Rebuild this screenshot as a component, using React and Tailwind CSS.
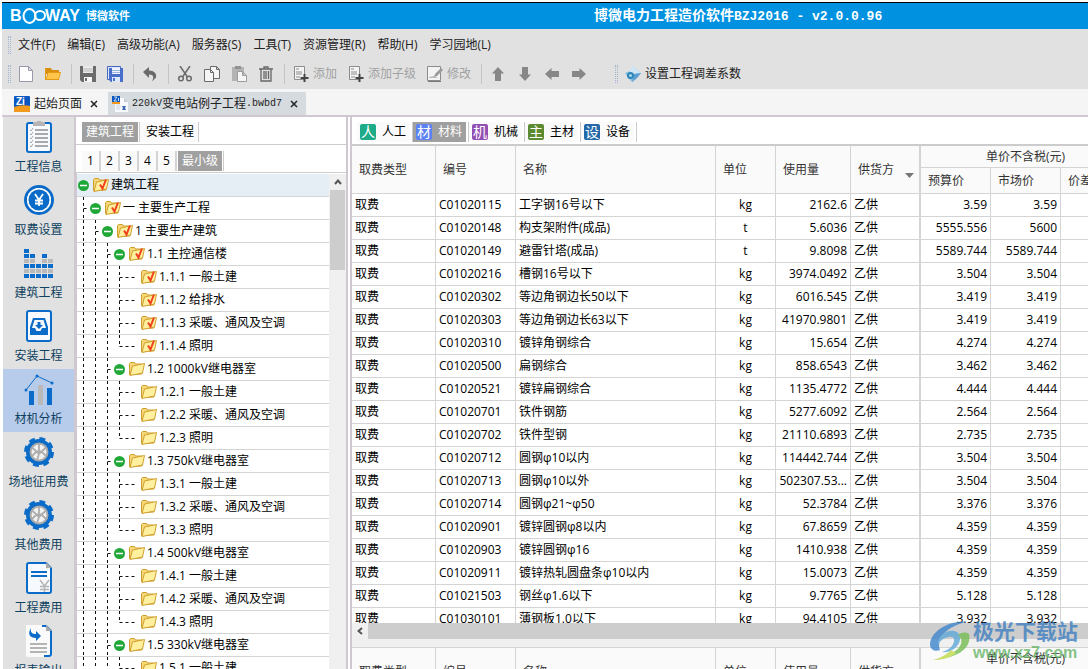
import { useState } from 'react';
import clsx from 'clsx';

const menus = [
  '文件(F)',
  '编辑(E)',
  '高级功能(A)',
  '服务器(S)',
  '工具(T)',
  '资源管理(R)',
  '帮助(H)',
  '学习园地(L)',
];

// level, label, has the check mark on its folder
const tree = [
  [0, '建筑工程', true],
  [1, '一 主要生产工程', true],
  [2, '1 主要生产建筑', true],
  [3, '1.1 主控通信楼', true],
  [4, '1.1.1 一般土建', true],
  [4, '1.1.2 给排水', true],
  [4, '1.1.3 采暖、通风及空调', true],
  [4, '1.1.4 照明', true],
  [3, '1.2 1000kV继电器室', false],
  [4, '1.2.1 一般土建', false],
  [4, '1.2.2 采暖、通风及空调', false],
  [4, '1.2.3 照明', false],
  [3, '1.3 750kV继电器室', false],
  [4, '1.3.1 一般土建', false],
  [4, '1.3.2 采暖、通风及空调', false],
  [4, '1.3.3 照明', false],
  [3, '1.4 500kV继电器室', false],
  [4, '1.4.1 一般土建', false],
  [4, '1.4.2 采暖、通风及空调', false],
  [4, '1.4.3 照明', false],
  [3, '1.5 330kV继电器室', false],
  [4, '1.5.1 一般土建', false],
  [4, '1.5.2 采暖、通风及空调', false],
];

const materials = [
  ['C01020115', '工字钢16号以下', 'kg', '2162.6', '3.59', '3.59'],
  ['C01020148', '构支架附件(成品)', 't', '5.6036', '5555.556', '5600'],
  ['C01020149', '避雷针塔(成品)', 't', '9.8098', '5589.744', '5589.744'],
  ['C01020216', '槽钢16号以下', 'kg', '3974.0492', '3.504', '3.504'],
  ['C01020302', '等边角钢边长50以下', 'kg', '6016.545', '3.419', '3.419'],
  ['C01020303', '等边角钢边长63以下', 'kg', '41970.9801', '3.419', '3.419'],
  ['C01020310', '镀锌角钢综合', 'kg', '15.654', '4.274', '4.274'],
  ['C01020500', '扁钢综合', 'kg', '858.6543', '3.462', '3.462'],
  ['C01020521', '镀锌扁钢综合', 'kg', '1135.4772', '4.444', '4.444'],
  ['C01020701', '铁件钢筋', 'kg', '5277.6092', '2.564', '2.564'],
  ['C01020702', '铁件型钢', 'kg', '21110.6893', '2.735', '2.735'],
  ['C01020712', '圆钢φ10以内', 'kg', '114442.744', '3.504', '3.504'],
  ['C01020713', '圆钢φ10以外', 'kg', '502307.53...', '3.504', '3.504'],
  ['C01020714', '圆钢φ21~φ50', 'kg', '52.3784', '3.376', '3.376'],
  ['C01020901', '镀锌圆钢φ8以内', 'kg', '67.8659', '4.359', '4.359'],
  ['C01020903', '镀锌圆钢φ16', 'kg', '1410.938', '4.359', '4.359'],
  ['C01020911', '镀锌热轧圆盘条φ10以内', 'kg', '15.0073', '4.359', '4.359'],
  ['C01021503', '钢丝φ1.6以下', 'kg', '9.7765', '5.128', '5.128'],
  ['C01030101', '薄钢板1.0以下', 'kg', '94.4105', '3.932', '3.932'],
];

const kinds = [
  { char: '人', label: '人工', color: 'bg-[#1dab8a]' },
  { char: '材', label: '材料', color: 'bg-[#5b82f5]' },
  { char: '机', label: '机械', color: 'bg-[#9350b4]' },
  { char: '主', label: '主材', color: 'bg-[#5c8a30]' },
  { char: '设', label: '设备', color: 'bg-[#2468a8]' },
];

/* ---------- sidebar icons ---------- */

function ClipboardIcon() {
  return (
    <svg width="32" height="32" viewBox="0 0 32 32">
      <rect x="4" y="2" width="24" height="29" rx="2" fill="#f6f9fd" stroke="#0a6cc8" strokeWidth="2" />
      <path d="M10 1h4V0h4v1h4v4H10z" fill="#b4b4b4" />
      {[9, 13, 17, 21, 25].map((y) => (
        <g key={y} stroke="#a9a9a9">
          <path d={`M12 ${y}h13`} strokeWidth="2" />
          <path d={`M7 ${y}l1 1 2-3`} fill="none" />
        </g>
      ))}
    </svg>
  );
}

function YenIcon() {
  return (
    <svg width="32" height="32" viewBox="0 0 32 32" fill="none">
      <circle cx="16" cy="16" r="13.5" stroke="#0a6cc8" strokeWidth="3" />
      <circle cx="16" cy="16" r="12" fill="#fff" />
      <circle cx="16" cy="16" r="10.5" fill="#0a6cc8" />
      <path d="M12 10l4 6 4-6M12 16.500h8M12 19.500h8M16 16v6" stroke="#fff" strokeWidth="1.800" />
    </svg>
  );
}

function BlocksIcon() {
  // one string per column, bottom to top: b = blue, g = grey
  const columns = ['bgbgbb', 'bgbgb', 'bgb', 'bgbgb', 'bgbg'];
  return (
    <svg width="32" height="32" viewBox="0 0 32 32">
      {columns.map((col, i) =>
        col.split('').map((c, j) => (
          <rect key={`${i}-${j}`} x={1 + i * 6} y={27 - j * 5} width="5" height="4" fill={c === 'b' ? '#0a6cc8' : '#b9b9b9'} />
        ))
      )}
    </svg>
  );
}

function InboxIcon() {
  return (
    <svg width="32" height="32" viewBox="0 0 32 32">
      <rect x="4" y="1" width="24" height="30" rx="2" fill="#f6f9fd" stroke="#0a6cc8" strokeWidth="2" />
      <path d="M10 8h12l3 9v8H7v-8z" fill="#0a6cc8" />
      <path d="M11.500 10h9l2.500 8h-4l-1.500 3h-4L12 18H9z" fill="#f6f9fd" />
      <path d="M14.500 12h3v3H20l-4 4-4-4h2.500z" fill="#0a6cc8" />
    </svg>
  );
}

function ChartIcon() {
  return (
    <svg width="32" height="32" viewBox="0 0 32 32">
      <path d="M3 17L14 3l15 7" fill="none" stroke="#0a6cc8" />
      <circle cx="3" cy="17" r="1.500" fill="#0a6cc8" />
      <circle cx="14" cy="3" r="1.500" fill="#0a6cc8" />
      <circle cx="29" cy="10" r="1.500" fill="#0a6cc8" />
      <path d="M6 18h5v14H6zM24 15h5v17h-5z" fill="#0a6cc8" />
      <path d="M15 12h5v20h-5z" fill="#b9b9b9" />
    </svg>
  );
}

function GearIcon() {
  return (
    <svg width="32" height="32" viewBox="0 0 32 32" fill="none">
      <circle cx="16" cy="16" r="13.000" stroke="#0a6cc8" strokeWidth="4" strokeDasharray="5.7 4.511" />
      <circle cx="16" cy="16" r="11" fill="#f1f1f1" stroke="#0a6cc8" strokeWidth="4" />
      <circle cx="16" cy="16" r="8.500" stroke="#a9a9a9" strokeWidth="2" />
      <path d="M9.500 12l4 3.500h5l4-3.500M9 20l4.500-4.500M23 20l-4.500-4.500M13.500 15.500L16 18l2.500-2.500M16 18l-2 6M16 15.500V8" stroke="#adadad" strokeWidth="1.800" />
    </svg>
  );
}

function BillIcon() {
  return (
    <svg width="32" height="32" viewBox="0 0 32 32" fill="none">
      <path d="M6 1h17l5 5v23q0 2-2 2H6q-2 0-2-2V3q0-2 2-2z" fill="#f6f9fd" stroke="#0a6cc8" strokeWidth="2" />
      <path d="M23 0v6h6z" fill="#a9a9a9" />
      <path d="M8 10h16M8 14h16" stroke="#0a6cc8" strokeWidth="2" />
      <path d="M17 18l4.500 6 4.500-6M17 24.500h9M17 27.500h9M21.500 24v6" stroke="#b4b4b4" strokeWidth="1.500" />
    </svg>
  );
}

function ReportIcon() {
  return (
    <svg width="32" height="32" viewBox="0 0 32 32" fill="none">
      <path d="M3 0h20l6 6v24q0 2-2 2H5q-2 0-2-2z" fill="#fafafa" />
      <path d="M19 1h4l5 5v23q0 2-2 2h-5" stroke="#0a6cc8" strokeWidth="2" />
      <path d="M23 0v6h6z" fill="#a9a9a9" />
      <path d="M8 3c-4 6-1 10 5 10v3l5-5-5-5v3C9 9 7 7 8 3z" fill="#0a6cc8" />
      <path d="M7 19h17M7 23h17M7 27h17" stroke="#b4b4b4" strokeWidth="2" />
    </svg>
  );
}

const sections = [
  { label: '工程信息', Icon: ClipboardIcon },
  { label: '取费设置', Icon: YenIcon },
  { label: '建筑工程', Icon: BlocksIcon },
  { label: '安装工程', Icon: InboxIcon },
  { label: '材机分析', Icon: ChartIcon },
  { label: '场地征用费', Icon: GearIcon },
  { label: '其他费用', Icon: GearIcon },
  { label: '工程费用', Icon: BillIcon },
  { label: '报表输出', Icon: ReportIcon },
];

/* ---------- toolbar icons ---------- */

const glyphs = {
  new: (
    <path d="M1.500.5h9l4 4v11h-13zM10.500.5v4h4" fill="#fff" stroke="#9a97ae" />
  ),
  open: (
    <>
      <path d="M0 2h6l1 2h7v4H0z" fill="#d98e12" />
      <path d="M0 14V3h1v9l2-6h13l-2 8z" fill="#e39a15" />
      <path d="M3.500 7h11.500l-1.500 6H1.500z" fill="#ffc54a" />
    </>
  ),
  save: (
    <>
      <path d="M0 0h16v16H2l-2-2z" fill="#6a6a6a" />
      <path d="M3 0h10v7H3z" fill="#e9e9e9" />
      <path d="M3 3h10M3 5h10" stroke="#bbb" />
      <path d="M4 11h8v5H4z" fill="#f4f4f4" />
      <path d="M5 12h2v3H5z" fill="#6a6a6a" />
    </>
  ),
  saveAll: (
    <>
      <path d="M.5.5h13v13H.5z" fill="#dfe8fb" stroke="#4768b8" />
      <path d="M2 2h14v14H4l-2-2z" fill="#4a6fca" />
      <path d="M5 2h8v6H5z" fill="#eef3fd" />
      <path d="M5 4.500h8M5 6.500h8" stroke="#9db3e2" />
      <path d="M5 11h8v5H5z" fill="#dfe8fb" />
      <path d="M6 12h2v3H6z" fill="#4a6fca" />
    </>
  ),
  undo: (
    <path d="M1 6l6-5v3.500c5 0 8 3 7 7l-4 4c2-4 2-7-3-7V12z" fill="#6a6a6a" />
  ),
  cut: (
    <g fill="none" stroke="#6a6a6a" strokeWidth="1.500">
      <path d="M3 0l7.500 11M13 0L5.500 11" />
      <circle cx="4" cy="12.500" r="2.300" />
      <circle cx="12" cy="12.500" r="2.300" />
    </g>
  ),
  copy: (
    <g fill="#f5f5f5" stroke="#6a6a6a">
      <path d="M6.500.5h6l3 3v9h-9zM12.500.5v3h3" />
      <path d="M.5 3.500h6l3 3v9h-9zM6.500 3.500v3h3" />
    </g>
  ),
  paste: (
    <>
      <path d="M1 1h12v14H1z" fill="#b3b3b3" />
      <path d="M4 0h6v3H4z" fill="#929292" />
      <path d="M6.500 5.500h5l4 4v6h-9zM11.500 5.500v4h4" fill="#f5f5f5" stroke="#9c9c9c" />
    </>
  ),
  trash: (
    <g fill="none" stroke="#666" strokeWidth="1.300">
      <path d="M1 3h14M6 3V1h4v2M3 3v12h10V3M6 5v8M8 5v8M10.500 5v8" />
    </g>
  ),
  add: (
    <>
      <path d="M1.500.5h10v13h-10z" fill="#f3f3f3" stroke="#8c8c8c" />
      <path d="M3 3h3M3 6h6M3 8h6M3 11h4" stroke="#8c8c8c" />
      <path d="M11.500 8v8M7.500 12h8" stroke="#444" strokeWidth="2" />
    </>
  ),
  edit: (
    <>
      <path d="M.5.5h13v14H.5z" fill="#f3f3f3" stroke="#8c8c8c" />
      <path d="M2 11l5-1 4 2H2z" fill="#bbb" />
      <path d="M14 2l2 2-6 6-3 1 1-3z" fill="#9a9a9a" />
      <path d="M1 15.500h13" stroke="#777" />
    </>
  ),
  up: <path d="M8 1l6 6.500h-3V15H5V7.500H2z" fill="#878787" />,
  down: <path d="M8 15l6-6.500h-3V1H5v7.500H2z" fill="#878787" />,
  left: <path d="M1 8l6.500-6v3H15v6H7.500v3z" fill="#878787" />,
  right: <path d="M15 8L8.500 2v3H1v6h7.500v3z" fill="#878787" />,
  gem: (
    <>
      <path d="M8 0l3 3 5 4-4 5-5 4-3-3-4-6 5-2z" fill="#8fc3e6" />
      <path d="M8 0l3 3 5 4-7 1-5-3z" fill="#cfe6f5" />
      <path d="M9 8l7-1-4 5-5 4z" fill="#5e9fd0" />
      <circle cx="5.500" cy="9.500" r="3.500" fill="#2f86b8" />
      <circle cx="5.500" cy="9.500" r="1.500" fill="#a8d9ee" />
    </>
  ),
};

function ToolButton({ name, title, label, muted }) {
  return (
    <button
      className={clsx('flex h-6 items-center gap-1 whitespace-nowrap', muted ? 'text-[#a2a2a2]' : 'text-[#222]')}
      aria-label={title}
    >
      <svg width="16" height="16" viewBox="0 0 16 16">
        {glyphs[name]}
      </svg>
      {label}
    </button>
  );
}

function Separator() {
  return <div className="mr-2 ml-2.5 h-5 w-px bg-[#c4c4c4]" />;
}

function Grip() {
  return <div className="h-[18px] w-[3px] border-r border-l border-dotted border-[#a3b4d0]" />;
}

function AppIcon() {
  return (
    <svg width="16" height="16" viewBox="0 0 16 16">
      <rect width="16" height="16" rx="1" fill="#0c57c0" />
      <path d="M0 11q8-3 16-1v5q0 1-1 1H1q-1 0-1-1z" fill="#f39a1c" />
      <text x="2" y="9" fontSize="10" fontWeight="700" fontFamily="Liberation Sans, sans-serif" fill="#fff">
        Zi
      </text>
    </svg>
  );
}

function FileIcon() {
  return (
    <svg width="16" height="16" viewBox="0 0 16 16">
      <path d="M3 2h9l4 4v10H3z" fill="#f7f9fc" />
      <path d="M12 2v4h4z" fill="#c4cbd6" />
      <rect width="8" height="6" fill="#0c57c0" />
      <path d="M0 6h8v2H0z" fill="#f39a1c" />
      <path d="M2 1h3L2 5h3M6.500 2v3" fill="none" stroke="#fff" strokeWidth=".8" />
      <path d="M4 9h4M4 11h5M4 13h4" stroke="#ccd4e2" />
      <path d="M10 14l1-2-1-2h4l-1 2 1 2z" fill="#3d66b4" />
    </svg>
  );
}

function CloseButton({ name }) {
  return (
    <button className="ml-1 w-2" aria-label={`关闭 ${name}`}>
      <svg width="8" height="8" viewBox="0 0 8 8">
        <path d="M1 1l6 6M7 1L1 7" stroke="#222" strokeWidth="1.500" />
      </svg>
    </button>
  );
}

function Logo() {
  return (
    <div className="flex items-center gap-[3px] text-white">
      <svg width="74" height="18" viewBox="0 0 74 18" role="img" aria-label="BOOWAY">
        <text x="1" y="14" fontSize="16" fontWeight="700" fontFamily="Liberation Sans, sans-serif" fill="#fff">
          B
        </text>
        <g fill="none" stroke="#fff">
          <ellipse cx="20.500" cy="9" rx="6" ry="7" strokeWidth="2" />
          <ellipse cx="31" cy="8.500" rx="5" ry="4.500" strokeWidth="2" />
        </g>
        <text x="36" y="14" fontSize="16" fontWeight="700" fontFamily="Liberation Sans, sans-serif" fill="#fff">
          WAY
        </text>
      </svg>
      <span className="text-[11px] font-bold">博微软件</span>
    </div>
  );
}

/* ---------- tree ---------- */

function Folder({ checked }) {
  return (
    <svg width="16" height="16" viewBox="0 0 16 16" className="shrink-0">
      <path d="M.5 13.500v-11l1-1h4l1 1.500h6l.5 2V13z" fill="#f6d878" stroke="#cf9f2c" />
      <path d="M3.500 5l12-2.500-2 9.500L1 14.500z" fill="#fff0a0" stroke="#cf9f2c" />
      {checked && <path d="M7 7.500l2.500 4L13 2.500" fill="none" stroke="#f0401c" strokeWidth="2" />}
    </svg>
  );
}

function Guides({ level, last }) {
  const leaf = level === 4;
  const width = 12 * level + 16;
  const branch = 12 * level - 5.5;
  return (
    <svg width={width} height="22" viewBox={`0 0 ${width} 22`} className="shrink-0">
      <g stroke="#111" strokeDasharray="3 3">
        {Array.from({ length: level }, (_, i) => (
          <path key={i} d={`M${6.5 + 12 * i} 0V${leaf && last && i === 3 ? 12 : 22}`} />
        ))}
        {level > 0 && <path d={`M${branch} 11.500h${leaf ? 15 : 3}`} />}
      </g>
      {!leaf && (
        <>
          <circle cx={12 * level + 6.5} cy="11.500" r="5.500" fill="#1fa838" />
          <path d={`M${12 * level + 3} 11.500h7`} stroke="#fff" strokeWidth="1.500" />
        </>
      )}
    </svg>
  );
}

function ProjectTree() {
  return (
    <div className="flex min-h-0 flex-1 border-l border-[#cfc8d0] pt-px">
      <ul className="min-w-0 flex-1 overflow-hidden">
        {tree.map(([level, label, checked], i) => (
          <li
            key={label}
            className={clsx(
              'flex h-[23px] items-center border-b border-[#d4d4d4] whitespace-nowrap text-black',
              i === 0 && 'bg-[#e6eef5]'
            )}
          >
            <Guides level={level} last={tree[i + 1]?.[0] !== 4} />
            <Folder checked={checked} />
            <span className="ml-0.5">{label}</span>
          </li>
        ))}
      </ul>
      <div className="flex w-[17px] flex-col bg-[#f0f0f0] pl-px">
        <button className="flex h-4 items-center justify-center" aria-label="向上滚动">
          <svg width="8" height="6" viewBox="0 0 8 6">
            <path d="M1 5l3-3.500L7 5" fill="none" stroke="#555" strokeWidth="2" />
          </svg>
        </button>
        <div className="mr-px h-20 bg-[#cdcdcd]" />
      </div>
    </div>
  );
}

/* ---------- material table ---------- */

const th = 'border-r border-b border-[#d4d4d4] bg-[#fafafa] px-[7px] font-normal text-[#333]';
const td = 'h-[23px] overflow-hidden border-r border-b border-[#d4d4d4] px-[3px] whitespace-nowrap';

function MaterialTable({ rows }) {
  return (
    <table className="w-[779px] table-fixed border-separate border-spacing-0 text-black">
      <colgroup>
        <col className="w-[84px]" />
        <col className="w-[80px]" />
        <col className="w-[200px]" />
        <col className="w-[60px]" />
        <col className="w-[75px]" />
        <col className="w-[70px]" />
        <col className="w-[70px]" />
        <col className="w-[70px]" />
        <col className="w-[70px]" />
      </colgroup>
      <thead className="text-left">
        <tr className="h-[22px]">
          <th rowSpan={2} className={th}>取费类型</th>
          <th rowSpan={2} className={th}>编号</th>
          <th rowSpan={2} className={th}>名称</th>
          <th rowSpan={2} className={th}>单位</th>
          <th rowSpan={2} className={th}>使用量</th>
          <th rowSpan={2} className={clsx(th, 'border-r-2')}>
            <div className="flex items-center justify-between">
              供货方
              <svg width="9" height="5" viewBox="0 0 9 5" className="-mr-0.5 self-end">
                <path d="M0 0h9L4.500 5z" fill="#777" />
              </svg>
            </div>
          </th>
          <th colSpan={3} className={clsx(th, 'text-center')}>单价不含税(元)</th>
        </tr>
        <tr className="h-[26px]">
          <th className={th}>预算价</th>
          <th className={th}>市场价</th>
          <th className={th}>价差</th>
        </tr>
      </thead>
      <tbody>
        {rows.map(([code, name, unit, amount, budget, market]) => (
          <tr key={code}>
            <td className={td}>取费</td>
            <td className={td}>{code}</td>
            <td className={td}>{name}</td>
            <td className={clsx(td, 'text-center')}>{unit}</td>
            <td className={clsx(td, 'text-right')}>{amount}</td>
            <td className={clsx(td, 'border-r-2')}>乙供</td>
            <td className={clsx(td, 'text-right')}>{budget}</td>
            <td className={clsx(td, 'text-right')}>{market}</td>
            <td className={td}></td>
          </tr>
        ))}
      </tbody>
    </table>
  );
}

function Watermark() {
  return (
    <div className="pointer-events-none absolute right-2.5 bottom-1.5 flex items-center gap-0.5 opacity-80">
      <svg width="42" height="42" viewBox="0 0 42 42" fill="none">
        <path d="M38 2C20 0 2 11 1 24c0 6 5 8 10 6C7 18 18 6 38 2z" fill="#3f86cc" />
        <path d="M9 24c1-9 8-14 16-13 7 1 8 9 3 15-4 5-10 7-15 6 8-2 13-8 12-13-1-4-10-3-16 5z" fill="#5fa8d8" />
        <path d="M40 14c3 13-9 24-36 26 14-3 26-9 28-16 1-4 0-7-3-9 4-3 8-3 11-1z" fill="#76bd52" />
        <path d="M4 40c8-2 14-6 18-10l5 3c-5 4-12 7-23 7z" fill="#c3d94a" />
      </svg>
      <div className="flex flex-col">
        <span className="text-[21px] leading-6 font-bold text-[#3f7fc0]">极光下载站</span>
        <span className="font-['Liberation_Sans',sans-serif] text-base leading-5 font-bold text-[#69b56a]">www.xz7.com</span>
      </div>
    </div>
  );
}

export default function App() {
  const [kind, setKind] = useState('材料');
  const [section, setSection] = useState('材机分析');

  return (
    <div className="relative flex h-screen flex-col overflow-hidden bg-white pt-0.5 pl-0.5 font-['Open_Sans','Noto_Sans_CJK_SC',sans-serif] text-xs leading-4 text-[#222]">
      <header className="flex h-[27px] shrink-0 items-center border-t border-black bg-[#0092e0] pl-[7px]">
        <Logo />
        <h1 className="ml-[43%] font-['Liberation_Mono','Noto_Sans_CJK_SC',monospace] text-sm font-bold whitespace-nowrap text-white">
          博微电力工程造价软件<span className="text-[13px]">BZJ2016 - v2.0.0.96</span>
        </h1>
      </header>

      <nav className="flex h-[30px] shrink-0 items-center gap-[7px] bg-[#e1e1e1] pt-0.5 pl-1.5">
        <Grip />
        <div className="flex gap-3">
          {menus.map((m) => (
            <button key={m} className="whitespace-nowrap">{m}</button>
          ))}
        </div>
      </nav>

      <div className="flex h-[30px] shrink-0 items-center bg-[#e1e1e1] pl-1.5">
        <Grip />
        <div className="ml-[7px] flex items-center gap-[11px]">
          <ToolButton name="new" title="新建" />
          <ToolButton name="open" title="打开" />
        </div>
        <Separator />
        <div className="flex items-center gap-[11px]">
          <ToolButton name="save" title="保存" />
          <ToolButton name="saveAll" title="全部保存" />
        </div>
        <Separator />
        <ToolButton name="undo" title="撤销" />
        <Separator />
        <div className="flex items-center gap-[11px]">
          <ToolButton name="cut" title="剪切" />
          <ToolButton name="copy" title="复制" />
          <ToolButton name="paste" title="粘贴" />
          <ToolButton name="trash" title="删除" />
        </div>
        <Separator />
        <div className="flex items-center gap-[11px]">
          <ToolButton name="add" label="添加" muted />
          <ToolButton name="add" label="添加子级" muted />
          <ToolButton name="edit" label="修改" muted />
        </div>
        <Separator />
        <div className="mr-7 flex items-center gap-[11px]">
          <ToolButton name="up" title="上移" />
          <ToolButton name="down" title="下移" />
          <ToolButton name="left" title="升级" />
          <ToolButton name="right" title="降级" />
        </div>
        <Grip />
        <div className="ml-[7px]">
          <ToolButton name="gem" label="设置工程调差系数" />
        </div>
      </div>

      <div className="flex h-7 shrink-0 items-end border-b-2 border-[#cfc8d0] bg-[#f5f5f5] pl-2.5">
        <div className="flex h-[23px] items-center gap-1 pr-2.5 pl-0.5">
          <AppIcon />
          <span>起始页面</span>
          <CloseButton name="起始页面" />
        </div>
        <div className="flex h-[23px] items-center gap-1 bg-[#d5dbdf] pr-2 pl-1">
          <FileIcon />
          <div className="flex items-center whitespace-nowrap">
            <span className="font-['Liberation_Mono',monospace] text-[10px]">220kV</span>
            <span>变电站例子工程</span>
            <span className="font-['Liberation_Mono',monospace] text-[10px]">.bwbd7</span>
          </div>
          <CloseButton name="220kV变电站例子工程" />
        </div>
      </div>

      <div className="flex min-h-0 flex-1 pl-px">
        <aside className="w-[73px] shrink-0 overflow-hidden border-r-2 border-[#cfc8d0] bg-[#e1e1e1]">
          {sections.map(({ label, Icon }) => (
            <button
              key={label}
              onClick={() => setSection(label)}
              className={clsx(
                'flex h-[63px] w-full flex-col items-center gap-1.5 pt-1 whitespace-nowrap text-[#0f4160]',
                section === label && 'bg-[#b7cbeb]'
              )}
            >
              <Icon />
              {label}
            </button>
          ))}
        </aside>

        <section className="flex w-[272px] shrink-0 flex-col border-r-2 border-[#cfc8d0]">
          <div className="flex h-7 items-center gap-px border-b border-[#cccccc] pt-1 pl-1.5">
            <button className="mb-0.5 h-5 bg-[#a0a0a0] px-1 text-white">建筑工程</button>
            <button className="mb-0.5 h-5 border-r border-l border-[#cccccc] bg-[#fafafa] pr-1 pl-1.5 text-black">安装工程</button>
          </div>
          <div className="flex h-7 items-center border-b border-[#cccccc] pt-1 pl-1.5">
            {[1, 2, 3, 4, 5].map((n) => (
              <button key={n} className="h-5 w-[19px] border-r-2 border-[#d4d4d4] bg-[#fafafa] text-black">
                {n}
              </button>
            ))}
            <button className="ml-px h-5 bg-[#a0a0a0] px-1 text-white">最小级</button>
            <div className="ml-px h-5 w-px bg-[#cccccc]" />
          </div>
          <ProjectTree />
        </section>

        <main className="ml-0.5 flex min-w-0 flex-1 flex-col border-l-2 border-[#cfc8d0]">
          <div className="flex h-[29px] shrink-0 items-center border-b-2 border-[#cccccc] pl-[5px]">
            {kinds.map(({ char, label, color }) => (
              <div key={label} className="mt-0.5 flex h-5 w-14 items-center gap-0.5">
                <button
                  onClick={() => setKind(label)}
                  className={clsx(
                    'flex h-5 w-[53px] items-center gap-1.5 pl-[3px] whitespace-nowrap',
                    kind === label ? 'bg-[#a0a0a0] text-white' : 'bg-[#fafafa] text-black'
                  )}
                >
                  <span className={clsx('h-4 w-4 rounded-xs text-center text-sm leading-4 text-white', color)}>{char}</span>
                  {label}
                </button>
                <div className="h-5 w-px bg-[#cccccc]" />
              </div>
            ))}
          </div>
          <div className="min-h-0 flex-1 overflow-hidden">
            <MaterialTable rows={materials} />
          </div>
          <div className="flex h-[25px] shrink-0 items-start border-b border-[#d4d4d4] bg-[#f0f0f0]">
            <button className="flex h-4 w-4 shrink-0 items-center justify-center" aria-label="向左滚动">
              <svg width="6" height="8" viewBox="0 0 6 8">
                <path d="M5 1L1.500 4 5 7" fill="none" stroke="#555" strokeWidth="2" />
              </svg>
            </button>
            <div className="h-4 flex-1 bg-[#cdcdcd]" />
          </div>
          <div className="h-[21px] shrink-0 overflow-hidden">
            <MaterialTable rows={[]} />
          </div>
        </main>
      </div>

      <Watermark />
    </div>
  );
}
